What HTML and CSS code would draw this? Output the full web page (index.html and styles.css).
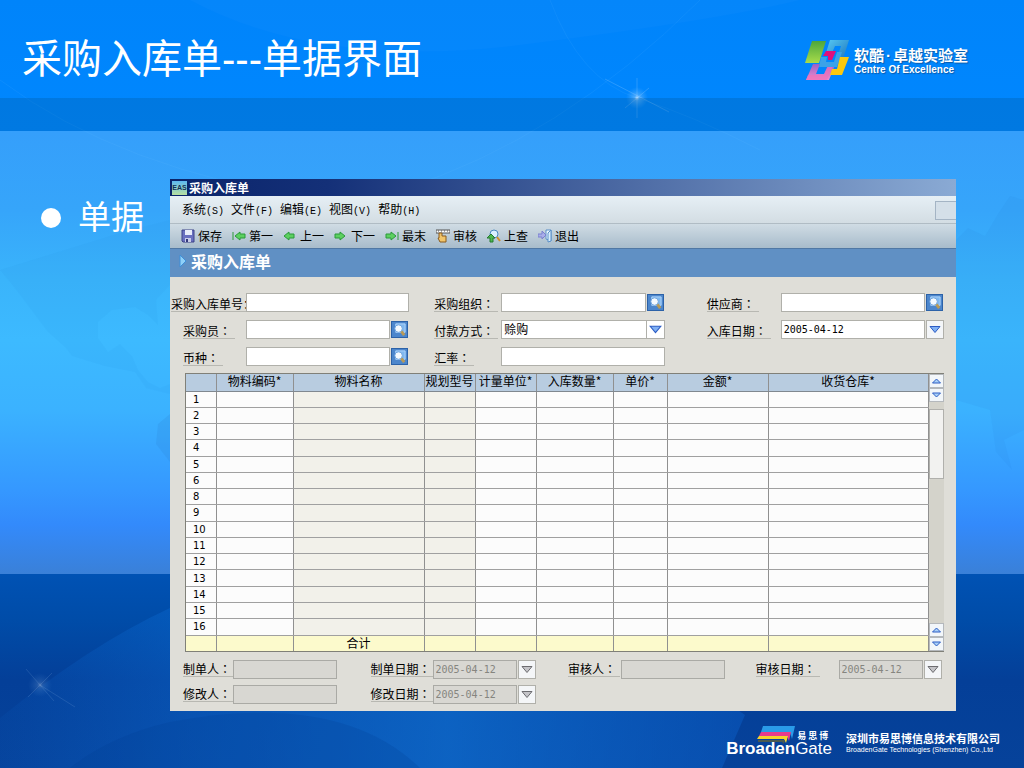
FILE: index.html
```html
<!DOCTYPE html>
<html lang="zh-CN">
<head>
    <meta charset="UTF-8">
    <meta name="viewport" content="width=device-width, initial-scale=1.0">
    <title>采购入库单---单据界面</title>
    <link rel="stylesheet" href="styles.css">
</head>
<body>
    <!-- Background map, curves and stars -->
    <svg class="backdrop" viewBox="0 0 1024 768" preserveAspectRatio="none" aria-hidden="true">
        <defs>
            <radialGradient id="star">
                <stop offset="0" stop-color="#fff" stop-opacity="0.7"/>
                <stop offset="0.25" stop-color="#bfe2ff" stop-opacity="0.35"/>
                <stop offset="1" stop-color="#7fc4ff" stop-opacity="0"/>
            </radialGradient>
            <linearGradient id="wave" x1="0" y1="0" x2="1" y2="0">
                <stop offset="0" stop-color="#0a62c8" stop-opacity="0.1"/>
                <stop offset="0.25" stop-color="#0c6cd4" stop-opacity="0.4"/>
                <stop offset="0.6" stop-color="#1074d8" stop-opacity="0.65"/>
                <stop offset="1" stop-color="#0a5cc4" stop-opacity="0.5"/>
            </linearGradient>
        </defs>
        <path d="M190 0Q320 70 520 45T800 0Z" fill="#fff" opacity="0.02"/>
        <path d="M0 80Q120 170 320 200M400 190Q560 140 700 0M550 0Q580 80 637 98T760 150" fill="none" stroke="#7cc6ff" stroke-opacity="0.09"/>
        <path d="M0 270L18 292L48 332L66 348L72 356L105 366L135 372L146 388L170 394V384L160 388L148 382L138 370L132 356L120 344L108 352L98 338L98 322L112 310L135 307L148 315L158 325L156 300L170 285V220L130 230Z" fill="#2c94e0" opacity="0.1"/>
        <path d="M170 414L158 424L156 444L170 462Z" fill="#2c80d0" opacity="0.2"/>
        <path d="M956 240L968 228L985 236L998 214L1010 196L1024 200V430L1004 440L1012 470L996 452L990 410L956 400Z" fill="#2c84dc" opacity="0.1"/>
        <path d="M0 718Q90 645 170 608Q450 500 745 715L722 768H0Z" fill="url(#wave)"/>
        <path d="M70 768Q110 736 170 722Q340 690 420 768Z" fill="#003a90" opacity="0.2"/>
        <circle cx="637" cy="98" r="11" fill="url(#star)"/>
        <path d="M605 79L669 112M637 78V118M625 108L649 88" stroke="#cbe8ff" stroke-opacity="0.2"/>
        <circle cx="40" cy="685" r="12" fill="url(#star)" opacity="0.4"/>
        <path d="M26 669L54 701M28 697L52 673M40 685L75 707" stroke="#cbe8ff" stroke-opacity="0.12"/>
    </svg>

    <header class="slide-header">
        <h1>采购入库单---单据界面</h1>
        <div class="brand">
            <svg width="48" height="42" viewBox="0 0 48 42" aria-hidden="true">
                <defs>
                    <linearGradient id="green" x1="0" y1="0" x2="0" y2="1"><stop offset="0" stop-color="#4da63c"/><stop offset="1" stop-color="#a8dc4a"/></linearGradient>
                    <linearGradient id="blue" x1="0" y1="0" x2="1" y2="1"><stop offset="0" stop-color="#55c9f5"/><stop offset="1" stop-color="#1a6fb8"/></linearGradient>
                    <linearGradient id="pink" x1="0" y1="0" x2="0" y2="1"><stop offset="0" stop-color="#9a60c8"/><stop offset="1" stop-color="#f08ccc"/></linearGradient>
                </defs>
                <path d="M8 2H22L15 24H1Z" fill="url(#green)"/>
                <path d="M26 1H45L38 23H32L37 7H31L28 14H22Z" fill="url(#blue)"/>
                <path d="M9 25H16L12 35H20L24 26H31L25 41H2Z" fill="url(#pink)"/>
                <path d="M4 36H20L24 27H29L23 41H2Z" fill="#f070b8" opacity="0.7"/>
                <path d="M22 12H32L28 21H24V17H19Z" fill="#e0107c"/>
                <path d="M17 18H23L22 23H30L33 13H38L33 28H15Z" fill="#3aa2e8"/>
                <path d="M36 18H45L38 36H26L28 30H33Z" fill="#fbc80e"/>
            </svg>
            <div class="brand-text">
                <strong>软酷<b class="dot">·</b>卓越实验室</strong>
                <span>Centre Of Excellence</span>
            </div>
        </div>
    </header>
    <div class="band"></div>

    <main class="slide-body">
        <ul class="bullets">
            <li>单据</li>
        </ul>

        <section class="window">
            <div class="title-bar">
                <span class="eas">EAS</span>
                <span>采购入库单</span>
            </div>
            <nav class="menu-bar">
                <button>系统<span class="key">(S)</span></button>
                <button>文件<span class="key">(F)</span></button>
                <button>编辑<span class="key">(E)</span></button>
                <button>视图<span class="key">(V)</span></button>
                <button>帮助<span class="key">(H)</span></button>
                <span class="menu-end"></span>
            </nav>
            <div class="tool-bar">
                <button>
                    <svg viewBox="0 0 14 14"><path d="M1 1H13V13H2L1 12Z" fill="#6a70c0" stroke="#3c4288"/><path d="M4 1H11V6H4Z" fill="#e8ecfa"/><path d="M4 9H10V13H4Z" fill="#c8cce8"/><path d="M5 10H7V13H5Z" fill="#34397c"/></svg>
                    保存
                </button>
                <button>
                    <svg viewBox="0 0 14 14"><path d="M1 3V11" stroke="#2f9a3c"/><path d="M3 7L8 3V5H13V9H8V11Z" fill="#5cd060" stroke="#2b9a3a"/></svg>
                    第一
                </button>
                <button>
                    <svg viewBox="0 0 14 14"><path d="M1 7L6 3V5H11V9H6V11Z" fill="#5cd060" stroke="#2b9a3a"/></svg>
                    上一
                </button>
                <button>
                    <svg viewBox="0 0 14 14"><path d="M11 7L6 3V5H1V9H6V11Z" fill="#5cd060" stroke="#2b9a3a"/></svg>
                    下一
                </button>
                <button>
                    <svg viewBox="0 0 14 14"><path d="M13 3V11" stroke="#2f9a3c"/><path d="M11 7L6 3V5H1V9H6V11Z" fill="#5cd060" stroke="#2b9a3a"/></svg>
                    最末
                </button>
                <button>
                    <svg viewBox="0 0 14 14"><path d="M0 1H14V4H0Z" fill="#fff" stroke="#555"/><path d="M2 2H3M5 2H6M8 2H9M11 2H12" stroke="#555"/><path d="M3 4H6V7H10V13H4L2 9H3Z" fill="#f2c56a" stroke="#8a5a1c"/></svg>
                    审核
                </button>
                <button>
                    <svg viewBox="0 0 14 14"><circle cx="7" cy="5" r="4" fill="#d9f0ff" stroke="#4a8ac0"/><path d="M10 8L13 12" stroke="#d0902c" stroke-width="2"/><path d="M4 5L8 9H6V13H3V9H0Z" fill="#4fb84f" stroke="#257a30"/></svg>
                    上查
                </button>
                <button>
                    <svg viewBox="0 0 14 14"><path d="M8 1H13V12L8 10Z" fill="#eaf6ff" stroke="#5a8fc8"/><path d="M13 1L10 4V13L13 12Z" fill="#d8eefc" stroke="#5a8fc8"/><path d="M0 5H4V2L8 6L4 10V8H0Z" fill="#a9aee8" stroke="#7a80d0"/></svg>
                    退出
                </button>
            </div>
            <h2 class="form-title">
                <svg width="8" height="14" viewBox="0 0 8 14" aria-hidden="true"><path d="M1 1L7 7L1 13Z" fill="#8fd0f8" stroke="#3f8fd8"/></svg>
                采购入库单
            </h2>

            <form class="fields">
                <label class="long" for="billNo">采购入库单号：</label>
                <div class="field"><input id="billNo" type="text"></div>
                <label class="second" for="org">采购组织<span class="colon">：</span></label>
                <div class="field"><input id="org" type="text"><button type="button" class="lookup" aria-label="查找采购组织"><svg viewBox="0 0 16 16"><path d="M4 2H14V11H4Z" fill="#7fb8f0" stroke="#b4d8fc"/><circle cx="7" cy="7" r="4" fill="#f4faff" stroke="#6aa0dc"/><path d="M10 10L13 14" stroke="#b89a58" stroke-width="3"/></svg></button></div>
                <label class="third" for="supplier">供应商<span class="colon">：</span></label>
                <div class="field"><input id="supplier" type="text"><button type="button" class="lookup" aria-label="查找供应商"><svg viewBox="0 0 16 16"><path d="M4 2H14V11H4Z" fill="#7fb8f0" stroke="#b4d8fc"/><circle cx="7" cy="7" r="4" fill="#f4faff" stroke="#6aa0dc"/><path d="M10 10L13 14" stroke="#b89a58" stroke-width="3"/></svg></button></div>

                <label for="buyer">采购员<span class="colon">：</span></label>
                <div class="field"><input id="buyer" type="text"><button type="button" class="lookup" aria-label="查找采购员"><svg viewBox="0 0 16 16"><path d="M4 2H14V11H4Z" fill="#7fb8f0" stroke="#b4d8fc"/><circle cx="7" cy="7" r="4" fill="#f4faff" stroke="#6aa0dc"/><path d="M10 10L13 14" stroke="#b89a58" stroke-width="3"/></svg></button></div>
                <label class="second" for="payment">付款方式<span class="colon">：</span></label>
                <div class="field select">
                    <select id="payment"><option>赊购</option></select>
                    <svg class="arrow" viewBox="0 0 16 16"><path d="M3 5H13L8 11Z" fill="#7fb0f4" stroke="#2c5cc4"/></svg>
                </div>
                <label class="third" for="inDate">入库日期<span class="colon">：</span></label>
                <div class="field"><input id="inDate" type="text" value="2005-04-12"><button type="button" class="drop" aria-label="选择日期"><svg viewBox="0 0 16 16"><path d="M3 5H13L8 11Z" fill="#7fb0f4" stroke="#2c5cc4"/></svg></button></div>

                <label for="currency">币种<span class="colon">：</span></label>
                <div class="field"><input id="currency" type="text"><button type="button" class="lookup" aria-label="查找币种"><svg viewBox="0 0 16 16"><path d="M4 2H14V11H4Z" fill="#7fb8f0" stroke="#b4d8fc"/><circle cx="7" cy="7" r="4" fill="#f4faff" stroke="#6aa0dc"/><path d="M10 10L13 14" stroke="#b89a58" stroke-width="3"/></svg></button></div>
                <label class="second" for="rate">汇率<span class="colon">：</span></label>
                <div class="field"><input id="rate" type="text"></div>
            </form>

            <div class="grid">
                <table>
                    <colgroup>
                        <col class="c-no"><col class="c-code"><col class="c-name"><col class="c-model"><col class="c-unit"><col class="c-qty"><col class="c-price"><col class="c-amount"><col class="c-store">
                    </colgroup>
                    <thead>
                        <tr><th></th><th>物料编码*</th><th>物料名称</th><th>规划型号</th><th>计量单位*</th><th>入库数量*</th><th>单价*</th><th>金额*</th><th>收货仓库*</th></tr>
                    </thead>
                    <tbody>
                        <tr><td>1</td><td></td><td></td><td></td><td></td><td></td><td></td><td></td><td></td></tr>
                        <tr><td>2</td><td></td><td></td><td></td><td></td><td></td><td></td><td></td><td></td></tr>
                        <tr><td>3</td><td></td><td></td><td></td><td></td><td></td><td></td><td></td><td></td></tr>
                        <tr><td>4</td><td></td><td></td><td></td><td></td><td></td><td></td><td></td><td></td></tr>
                        <tr><td>5</td><td></td><td></td><td></td><td></td><td></td><td></td><td></td><td></td></tr>
                        <tr><td>6</td><td></td><td></td><td></td><td></td><td></td><td></td><td></td><td></td></tr>
                        <tr><td>8</td><td></td><td></td><td></td><td></td><td></td><td></td><td></td><td></td></tr>
                        <tr><td>9</td><td></td><td></td><td></td><td></td><td></td><td></td><td></td><td></td></tr>
                        <tr><td>10</td><td></td><td></td><td></td><td></td><td></td><td></td><td></td><td></td></tr>
                        <tr><td>11</td><td></td><td></td><td></td><td></td><td></td><td></td><td></td><td></td></tr>
                        <tr><td>12</td><td></td><td></td><td></td><td></td><td></td><td></td><td></td><td></td></tr>
                        <tr><td>13</td><td></td><td></td><td></td><td></td><td></td><td></td><td></td><td></td></tr>
                        <tr><td>14</td><td></td><td></td><td></td><td></td><td></td><td></td><td></td><td></td></tr>
                        <tr><td>15</td><td></td><td></td><td></td><td></td><td></td><td></td><td></td><td></td></tr>
                        <tr><td>16</td><td></td><td></td><td></td><td></td><td></td><td></td><td></td><td></td></tr>
                    </tbody>
                    <tfoot>
                        <tr><td></td><td></td><td>合计</td><td></td><td></td><td></td><td></td><td></td><td></td></tr>
                    </tfoot>
                </table>
                <div class="scroll">
                    <button aria-label="上一页"><svg viewBox="0 0 12 12"><path d="M2 8H10L6 4Z" fill="#a8d0f8" stroke="#2c5cc4"/></svg></button>
                    <button aria-label="下一行"><svg viewBox="0 0 12 12"><path d="M2 4H10L6 8Z" fill="#a8d0f8" stroke="#2c5cc4"/></svg></button>
                    <div class="track"><div class="thumb"></div></div>
                    <button aria-label="上一行"><svg viewBox="0 0 12 12"><path d="M2 8H10L6 4Z" fill="#a8d0f8" stroke="#2c5cc4"/></svg></button>
                    <button aria-label="下一页"><svg viewBox="0 0 12 12"><path d="M2 4H10L6 8Z" fill="#a8d0f8" stroke="#2c5cc4"/></svg></button>
                </div>
            </div>

            <form class="audit">
                <label for="maker">制单人<span class="colon">：</span></label>
                <div class="field"><input id="maker" type="text" disabled></div>
                <label class="a-second" for="makeDate">制单日期<span class="colon">：</span></label>
                <div class="field"><input id="makeDate" type="text" value="2005-04-12" disabled><button type="button" class="drop" disabled aria-label="选择日期"><svg viewBox="0 0 16 16"><path d="M3 5H13L8 11Z" fill="#c4c4c8" stroke="#6c6c70"/></svg></button></div>
                <label class="a-third" for="auditor">审核人<span class="colon">：</span></label>
                <div class="field"><input id="auditor" type="text" disabled></div>
                <label class="a-fourth" for="auditDate">审核日期<span class="colon">：</span></label>
                <div class="field"><input id="auditDate" type="text" value="2005-04-12" disabled><button type="button" class="drop" disabled aria-label="选择日期"><svg viewBox="0 0 16 16"><path d="M3 5H13L8 11Z" fill="#c4c4c8" stroke="#6c6c70"/></svg></button></div>

                <label for="editor">修改人<span class="colon">：</span></label>
                <div class="field"><input id="editor" type="text" disabled></div>
                <label class="a-second" for="editDate">修改日期<span class="colon">：</span></label>
                <div class="field"><input id="editDate" type="text" value="2005-04-12" disabled><button type="button" class="drop" disabled aria-label="选择日期"><svg viewBox="0 0 16 16"><path d="M3 5H13L8 11Z" fill="#c4c4c8" stroke="#6c6c70"/></svg></button></div>
            </form>
        </section>
    </main>

    <footer class="slide-footer">
        <div class="gate">
            <div class="gate-top">
                <svg width="38" height="18" viewBox="0 0 38 18" aria-hidden="true">
                    <path d="M6 0H38L35 13L33 6H4Z" fill="#2a9be8"/>
                    <path d="M4 6H34L32 15L30 10H2Z" fill="#e83a8c"/>
                    <path d="M2 10H31L29 17L27 13H0Z" fill="#f6d22c"/>
                    <path d="M1 14H28L27 18L25 16H1Z" fill="#4a5a50"/>
                </svg>
                <span class="gate-cn"><b>易</b><b>思</b><b>博</b></span>
            </div>
            <div class="gate-name"><b>Broaden</b>Gate</div>
        </div>
        <div class="company">
            <strong>深圳市易思博信息技术有限公司</strong>
            <span>BroadenGate Technologies (Shenzhen) Co.,Ltd</span>
        </div>
    </footer>
</body>
</html>
```
FILE: styles.css
```css
* {
    box-sizing: border-box;
}
body {
    margin: 0;
    min-height: 100vh;
    display: flex;
    flex-direction: column;
    font-family: "Liberation Sans", "Noto Sans CJK SC", sans-serif;
    color: #fff;
    background: linear-gradient(#0084fa 0, #0087ff 131px, #359ffb 131px, #36a5fa 210px, #3ab4fb 280px, #3dbaff 340px, #3bb2ff 410px, #3598ff 490px, #338afb 525px, #3a80d8 574px, #0052b4 574px, #004ca8 620px, #043f98 680px, #06429a 768px);
    position: relative;
}
button,
input,
select {
    font: inherit;
    margin: 0;
    padding: 0;
}
.backdrop {
    position: absolute;
    left: 0;
    top: 0;
    width: 100%;
    height: 100%;
    z-index: -1;
}

/* Header */
.slide-header {
    height: 98px;
    display: flex;
    justify-content: space-between;
    padding: 0 56px 0 22px;
}
.slide-header h1 {
    margin: 31px 0 0;
    font-size: 40px;
    font-weight: normal;
    line-height: 56px;
}
.brand {
    display: flex;
    gap: 2px;
    margin-top: 39px;
}
.brand-text {
    display: flex;
    flex-direction: column;
    padding-top: 8px;
    text-shadow: 1px 1px 1px #0a5aa8;
}
.brand-text strong {
    font-size: 15px;
    line-height: 18px;
}
.brand-text .dot {
    padding: 0 2px;
}
.brand-text span {
    font-size: 10px;
    font-weight: bold;
    line-height: 10px;
}
.band {
    height: 33px;
    background-color: rgba(0,80,140,0.25);
}

/* Body */
.slide-body {
    display: flex;
    padding: 48px 68px 0 41px;
}
.bullets {
    width: 129px;
    margin: 0;
    padding: 14px 0 0;
    list-style: none;
    font-size: 33px;
    line-height: 50px;
}
.bullets li {
    display: flex;
    align-items: center;
    gap: 17px;
}
.bullets li::before {
    content: "";
    width: 20px;
    height: 20px;
    border-radius: 50%;
    background-color: #fff;
}

/* Window */
.window {
    flex: 1;
    min-width: 0;
    color: #000;
    font-family: "Noto Sans CJK SC", sans-serif;
    font-size: 12px;
    line-height: 14px;
    background-color: #dfded8;
}
.title-bar {
    display: flex;
    align-items: center;
    gap: 2px;
    height: 17px;
    padding-left: 2px;
    color: #fff;
    font-weight: bold;
    background: linear-gradient(to right, #0a246a, #143078 20%, #8aaad4);
}
.eas {
    width: 15px;
    height: 14px;
    color: #103058;
    font-family: "Liberation Sans", sans-serif;
    font-size: 7px;
    text-align: center;
    background: linear-gradient(#5cb8f0, #b8e0a0);
}
.menu-bar {
    display: flex;
    align-items: center;
    gap: 7px;
    height: 28px;
    padding: 2px 0 0 12px;
    background: linear-gradient(#e6eff5, #d3dde3);
    border-bottom: 1px solid #b0bcc4;
}
.menu-bar button,
.tool-bar button {
    border: none;
    background: none;
    white-space: nowrap;
}
.key {
    font-family: "Liberation Mono", monospace;
    font-size: 10px;
}
.menu-end {
    width: 21px;
    height: 19px;
    margin-left: auto;
    border: 1px solid #a4b4c4;
    border-right: none;
    background-color: #d4dfe8;
}
.tool-bar {
    display: flex;
    align-items: center;
    height: 24px;
    padding-left: 11px;
    background: linear-gradient(#d0dce4, #a8bccb);
}
.tool-bar button {
    display: flex;
    align-items: center;
    gap: 3px;
    width: 51px;
}
.tool-bar svg {
    width: 14px;
    height: 14px;
    flex: none;
}
.form-title {
    display: flex;
    align-items: center;
    gap: 4px;
    height: 29px;
    margin: 0;
    padding: 0 0 4px 9px;
    color: #fff;
    font-size: 16px;
    line-height: 24px;
    background-color: #6090c4;
    border-top: 1px solid #5078a4;
}
.form-title svg {
    flex: none;
}

/* Form */
.fields,
.audit {
    display: grid;
    align-items: center;
}
.fields {
    grid-template-columns: 63px 1fr 92px 1fr 116px 1fr;
    row-gap: 8px;
    padding: 16px 12px 7px 13px;
}
.audit {
    grid-template-columns: 50px 1fr 96px 1fr 85px 1fr 114px 1fr;
    row-gap: 6px;
    padding: 8px 14px 7px 13px;
}
.fields label,
.audit label {
    justify-self: start;
    padding-right: 4px;
    white-space: nowrap;
    border-bottom: 1px solid #b8b8b2;
}
.fields label {
    padding-top: 3px;
}
/* centred full-width colon */
.colon {
    font-family: "Noto Sans CJK TC", sans-serif;
    -webkit-locale: "zh-TW";
}
.fields .long {
    margin-left: -12px;
}
.fields .second {
    margin-left: 25px;
}
.fields .third {
    margin-left: 42px;
}
.audit .a-second {
    margin-left: 34px;
}
.audit .a-third {
    margin-left: 32px;
}
.audit .a-fourth {
    margin-left: 31px;
}
.field {
    display: flex;
    min-width: 0;
    height: 19px;
    position: relative;
}
.field input,
.field select {
    flex: 1;
    width: 0;
    min-width: 0;
    height: 19px;
    padding: 0 2px;
    color: #000;
    background-color: #fff;
    border: 1px solid #b0b0aa;
    border-radius: 0;
}
.field input {
    font-family: "DejaVu Sans Mono", monospace;
    font-size: 10px;
}
.field select {
    padding: 0 0 2px 2px;
    appearance: none;
}
.field .arrow {
    position: absolute;
    right: 0;
    top: 0;
    width: 19px;
    height: 19px;
    border: 1px solid #b0b0aa;
    pointer-events: none;
}
.lookup {
    width: 17px;
    height: 17px;
    margin: 1px;
    background-color: #4c86cc;
    border: 1px solid #2c62a8;
}
.drop {
    width: 18px;
    height: 19px;
    margin-left: 1px;
    background-color: #f4f6f8;
    border: 1px solid #b0b0aa;
}
.lookup svg,
.drop svg,
.scroll svg {
    display: block;
    width: 100%;
    height: 100%;
}
.field input:disabled {
    color: #85857f;
    background-color: #d8d7d2;
    border-color: #aaaaa5;
}

/* Grid */
.grid {
    display: flex;
    height: 279px;
    margin: 0 12px 0 15px;
    border: 1px solid #808078;
}
.grid table {
    flex: 1;
    width: 0;
    table-layout: fixed;
    border-collapse: collapse;
}
.c-no {
    width: 30px;
}
.c-code,
.c-qty {
    width: 77px;
}
.c-name {
    width: 131px;
}
.c-model {
    width: 51px;
}
.c-unit {
    width: 61px;
}
.c-price {
    width: 54px;
}
.c-amount {
    width: 101px;
}
.c-store {
    width: 160px;
}
.grid th,
.grid td {
    padding: 0;
    text-align: center;
    line-height: 13px;
    white-space: nowrap;
    border-right: 1px solid #909090;
    border-bottom: 1px solid #a0a0a0;
}
.grid thead tr {
    height: 17px;
}
.grid tfoot tr {
    height: 16px;
}
.grid th {
    padding-bottom: 3px;
    font-weight: normal;
    background-color: #b8cce0;
    border-bottom-color: #808890;
}
.grid td {
    background-color: #fcfcfc;
}
.grid tbody td:first-child {
    padding-left: 7px;
    text-align: left;
    font-family: "DejaVu Sans", sans-serif;
    font-size: 10px;
}
.grid tbody td:nth-child(3),
.grid tbody td:nth-child(4) {
    background-color: #f2f1ea;
}
.grid tfoot td {
    padding-bottom: 2px;
    background-color: #fcfacc;
    border-bottom: none;
}
.scroll {
    display: flex;
    flex-direction: column;
    width: 15px;
    background-color: #d4d3cb;
}
.scroll button {
    width: 15px;
    height: 14px;
    background-color: #f2f6fa;
    border: 1px solid #b4b8bc;
}
.track {
    flex: 1;
    padding-top: 7px;
}
.thumb {
    height: 70px;
    background-color: #f2f2f0;
    border: 1px solid #b0b0ac;
}

/* Footer */
.slide-footer {
    display: flex;
    justify-content: flex-end;
    gap: 14px;
    padding: 15px 24px 0 0;
}
.gate-top {
    display: flex;
    gap: 2px;
    height: 15px;
    padding-left: 31px;
}
.gate-cn {
    display: flex;
    gap: 2px;
    padding-top: 5px;
    font-size: 9px;
    line-height: 11px;
}
.gate-name {
    position: relative;
    font-size: 17px;
    line-height: 16px;
}
.company {
    display: flex;
    flex-direction: column;
    padding-top: 7px;
}
.company strong {
    font-size: 11px;
    line-height: 13px;
}
.company span {
    font-size: 7px;
    line-height: 8px;
}
```
